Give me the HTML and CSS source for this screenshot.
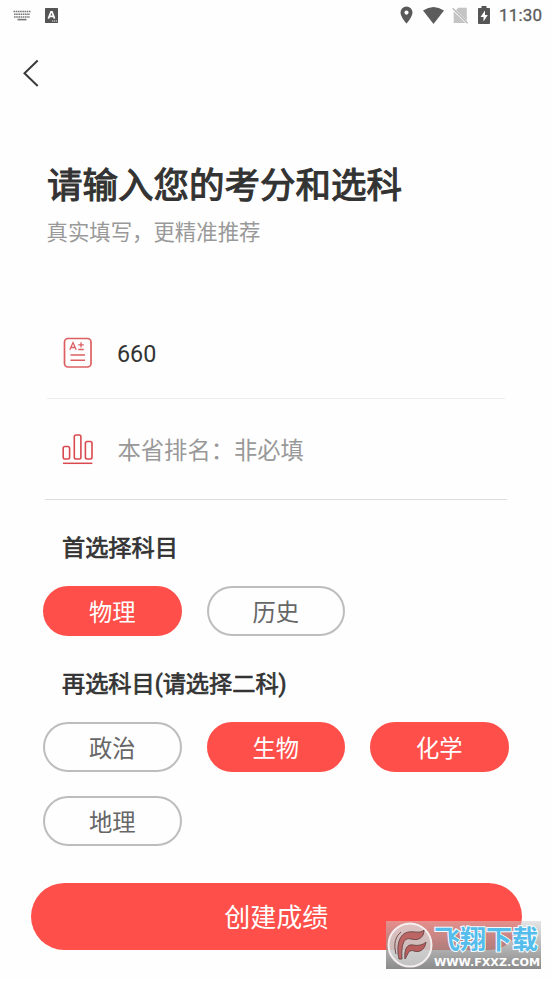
FILE: index.html
```html
<!DOCTYPE html>
<html lang="zh-CN">
<head>
<meta charset="utf-8">
<title>创建成绩</title>
<link rel="stylesheet" href="styles.css">
</head>
<body>
<div class="screen">
  <header class="status">
    <svg class="keyboard" width="18" height="11" viewBox="0 0 18 11"><g fill="none" stroke="#777" stroke-width="1.6"><path d="M0.5 1.5H17.5M1 4.3H17M1 7H17" stroke-dasharray="1.6 .6"/><path d="M4.5 9.6H13.5"/></g></svg>
    <svg class="input-app" width="13" height="15" viewBox="0 0 13 15"><rect width="13" height="15" rx=".6" fill="#555"/><path d="M3.4 10.6L6 3.8h1l2.6 6.8M4.5 8.4h4" fill="none" stroke="#fff" stroke-width="1.7"/><path d="M7 13h5" stroke="#eee" stroke-width="1" stroke-dasharray="1.2 .7"/></svg>
    <svg class="pin" width="13" height="18" viewBox="0 0 13 18"><path fill-rule="evenodd" d="M6.500 .5A6 6 0 0 0 .5 6.500C.5 11 6.500 17.500 6.500 17.500S12.500 11 12.500 6.500A6 6 0 0 0 6.500 .5Zm0 4a2.100 2.100 0 1 1 0 4.200 2.100 2.100 0 0 1 0-4.200Z" fill="#595959"/></svg>
    <svg class="wifi" width="21" height="17" viewBox="0 0 21 17"><path d="M0 3.600Q10.500-3.400 21 3.600L10.500 17Z" fill="#5c5c5c"/></svg>
    <svg class="sim" width="17" height="17" viewBox="0 0 17 17"><path d="M4 3L6.300.7H14.800V14L4 3ZM1.700 4.500L13.500 16H1.700Z" fill="#c4c4c4"/><path d="M.7 1.200L15.600 16.300" stroke="#b8b8b8" stroke-width="1.400"/></svg>
    <svg class="battery" width="12" height="18" viewBox="0 0 12 18"><path d="M3.500 0h5v2H11a1 1 0 0 1 1 1v14a1 1 0 0 1-1 1H1a1 1 0 0 1-1-1V3a1 1 0 0 1 1-1h2.500Z" fill="#555"/><path d="M7 4.500L2.500 11h3v4.500L9.800 9H7Z" fill="#fff"/></svg>
    <time class="clock">11:30</time>
  </header>
  <nav class="nav"><svg width="18" height="28" viewBox="0 0 18 28"><path d="M14.700 1.500L1.500 14.200L14.700 27" fill="none" stroke="#3a3a3a" stroke-width="2"/></svg></nav>
  <section class="intro">
    <h1>请输入您的考分和选科</h1>
    <p>真实填写，更精准推荐</p>
  </section>
  <section class="fields">
    <div class="field score">
      <svg width="30" height="32" viewBox="0 0 30 32"><g fill="none" stroke="#dc6062" stroke-width="1.700"><rect x="1.500" y="1.500" width="26.500" height="28.500" rx="3.500"/><path d="M7.500 18h14.500M7.500 23.200h14.500" stroke-width="1.500"/><path d="M6.800 12.800L10 5.500L13.200 12.800M8 10.500h4M15.300 7.900h5.500M18 5.200v5.400M15.300 12.500h5.500" stroke-width="1.300"/></g></svg>
      <span>660</span>
    </div>
    <div class="field rank">
      <svg width="32" height="32" viewBox="0 0 32 32"><g fill="none" stroke="#d94a50" stroke-width="1.600"><rect x="1.200" y="13.500" width="6.400" height="12.500" rx="1.700"/><rect x="12.300" y="2" width="6.600" height="24" rx="1.700"/><rect x="23.400" y="8.500" width="6.600" height="17.500" rx="1.700"/><path d="M1 30.300H30.400" stroke-width="1.500"/></g></svg>
      <span>本省排名：非必填</span>
    </div>
  </section>
  <section class="subjects first">
    <h2>首选择科目</h2>
    <div class="options"><button class="pill on">物理</button><button class="pill">历史</button></div>
  </section>
  <section class="subjects second">
    <h2>再选科目(请选择二科)</h2>
    <div class="options"><button class="pill">政治</button><button class="pill on">生物</button><button class="pill on">化学</button><button class="pill">地理</button></div>
  </section>
  <button class="submit">创建成绩</button>
  <aside class="watermark">
    <svg class="seal" width="46" height="46" viewBox="0 0 46 46"><circle cx="23" cy="23" r="21.500" fill="#ddd" fill-opacity=".65" stroke="#f6eeee" stroke-width="2"/><g stroke="#704b4b" stroke-width="1" stroke-linejoin="round"><path d="M12 37C9 24 12 11 22 10C28 9 33 12 37 8C37 16 31 19 24 17C17 15 14 22 15 37Z" fill="#bd6464"/><path d="M18 37C17 27 20 22 26 23C31 24 36 23 39 20C38 28 32 31 27 29C22 27 21 32 18 37Z" fill="#b85c5c"/><path d="M9 32C6 21 9 14 14 10" fill="none"/></g></svg>
    <div class="brand">
      <span class="brand-name">飞翔下载</span>
      <svg class="brand-url" width="108" height="15" viewBox="0 0 108 15"><text x="0" y="11.500" textLength="106" lengthAdjust="spacingAndGlyphs">WWW.FXXZ.COM</text></svg>
    </div>
  </aside>
</div>
</body>
</html>
```
FILE: styles.css
```css
* { box-sizing: border-box; }
body { margin: 0; background: #fff; color: #333; font-family: Roboto, "Noto Sans CJK SC", sans-serif; }
button { font: inherit; padding: 0; border: 0; }
.screen { position: relative; width: 552px; height: 981px; overflow: hidden; background: #fefefe; display: flex; flex-direction: column; }
.status { height: 31px; display: flex; align-items: center; padding: 0 10px 1px 13px; flex: none; }
.input-app { margin-left: 14px; }
.pin { margin-left: auto; }
.wifi { margin-left: 10px; }
.sim { margin-left: 8px; }
.battery { margin-left: 9px; }
.clock { margin-left: 9px; font-size: 17px; line-height: 20px; font-weight: 400; color: #5c5c5c; -webkit-text-stroke: .3px #5c5c5c; letter-spacing: .2px; width: 43px; white-space: nowrap; }
.nav { height: 84px; padding: 28px 0 0 23px; flex: none; }
.nav svg { display: block; }
.intro { height: 187px; padding: 46px 46.500px 0; flex: none; }
h1, h2, p { margin: 0; font-weight: 400; }
h1 { margin-left: .5px; font-size: 35.5px; line-height: 50px; -webkit-text-stroke: 1.1px #333; white-space: nowrap; }
.intro p { margin-top: 6px; font-size: 21.4px; line-height: 32px; color: #999; }
.fields { flex: none; padding: 0 45px; }
.field { display: flex; align-items: center; font-size: 23.3px; }
.field svg { flex: none; }
.score { height: 97px; margin: 0 2px; padding: 6px 0 0 16px; border-bottom: 1px solid #ececec; }
.score svg { margin-right: 24px; }
.score span { padding-top: 2px; }
.rank { height: 101px; padding: 0 0 0 17px; border-bottom: 1px solid #ddd; color: #999; }
.rank svg { margin-right: 23.500px; }
.subjects { flex: none; padding: 0 43px; }
h2 { margin-left: 19px; font-size: 23.2px; line-height: 34px; -webkit-text-stroke: .7px #333; }
.first { height: 136px; padding-top: 31px; }
.second { height: 247px; padding-top: 31px; }
.options { margin-top: 20.500px; display: grid; grid-template-columns: repeat(3, 138.500px); column-gap: 25px; row-gap: 24px; }
.pill { height: 50px; padding-top: 4px; border: 2px solid #bdbdbd; border-radius: 25px; background: #fefefe; color: #666; font-size: 23.3px; line-height: 34px; }
.pill.on { background: #ff4f4a; border-color: #ff4f4a; color: #fff; }
.submit { flex: none; width: 490.500px; height: 67px; padding-top: 3px; margin-left: 31px; border-radius: 34px; background: #ff4f4a; color: #fff; font-size: 26px; line-height: 38px; }
.watermark { position: absolute; left: 386px; top: 921px; width: 155px; height: 48px; display: flex; align-items: center; background: linear-gradient(rgba(205,205,205,.5), rgba(120,120,120,.86)); }
.seal { flex: none; margin-left: 1px; }
.brand { display: flex; flex-direction: column; margin-left: 1px; }
.brand-name { font-family: "Noto Sans CJK SC", sans-serif; font-size: 26px; line-height: 33px; font-weight: 700; color: #55bdec; -webkit-text-stroke: 2px #f4fcff; paint-order: stroke fill; white-space: nowrap; }
.brand-url { display: block; font-family: "DejaVu Sans", sans-serif; font-size: 11px; font-weight: 700; fill: #fff; }
```
